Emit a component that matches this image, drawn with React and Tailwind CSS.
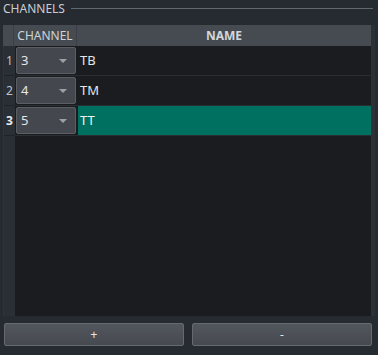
import React from 'react';

const rows = [
    { num: 1, channel: '3', name: 'TB' },
    { num: 2, channel: '4', name: 'TM' },
    { num: 3, channel: '5', name: 'TT', selected: true },
];

function Combo({ value }) {
    return (
        <div className="flex h-[27px] w-[60px] items-center justify-between rounded-[2px] border border-[#5b5f64] bg-[#44484e] pl-[4px] pr-[8px] text-[13px] text-[#e4e6e8]">
            <span>{value}</span>
            <svg width="8" height="4" viewBox="0 0 8 4">
                <path d="M0 0h8L4 4z" fill="#9da1a6" />
            </svg>
        </div>
    );
}

export default function App() {
    return (
        <div
            className="flex h-[355px] w-[378px] flex-col bg-[#262a31] text-[#dfe2e5]"
            style={{ fontFamily: '"Noto Sans", "Open Sans", sans-serif' }}
        >
            <div className="flex h-[17px] items-center gap-[6px] pl-[3px] pr-[5px]">
                <span className="text-[12px] leading-none text-[#c9ced3]">CHANNELS</span>
                <div className="h-px flex-1 bg-[#5f6871]" />
            </div>

            <div className="mx-[3px] mt-[8px] flex h-[291px] border-r-[4px] border-[#2c3037]">
                <div className="flex flex-1 flex-col bg-[#1b1c20]">
                    <div className="flex h-[21px] bg-[#464b51] text-[12px]">
                        <div className="w-[11px] border-r border-[#3b3f45]" />
                        <div className="flex w-[63px] items-center justify-center border-r border-[#3b3f45] text-[#cfd3d7]">
                            CHANNEL
                        </div>
                        <div className="flex flex-1 items-center justify-center font-bold text-[#d3d7db]">
                            NAME
                        </div>
                    </div>
                    <div className="flex flex-1">
                        <div className="flex w-[12px] flex-col border-l border-[#2f333a] bg-[#2a2e35]">
                            {rows.map((r) => (
                                <div
                                    key={r.num}
                                    className={`flex h-[30px] items-center justify-center border-b border-[#1f2226] text-[12px] ${r.selected ? 'font-bold text-[#e8eaec]' : 'text-[#bfc3c8]'}`}
                                >
                                    {r.num}
                                </div>
                            ))}
                        </div>
                        <div className="flex flex-1 flex-col">
                            {rows.map((r) => (
                                <div key={r.num} className="flex h-[30px] border-b border-[#2a2d32]">
                                    <div className="flex w-[63px] items-center pl-[1px]">
                                        <Combo value={r.channel} />
                                    </div>
                                    <div
                                        className={`flex flex-1 items-center pl-[2px] text-[13px] ${r.selected ? 'bg-[#007060] text-[#eef3f2]' : 'text-[#e4e6e8]'}`}
                                    >
                                        {r.name}
                                    </div>
                                </div>
                            ))}
                        </div>
                    </div>
                </div>
            </div>

            <div className="mt-[7px] flex gap-[8px] pl-[4px] pr-[6px]">
                <button className="flex h-[23px] flex-1 items-center justify-center rounded-[2px] border border-[#656a70] bg-gradient-to-b from-[#52575d] to-[#464a50] text-[12px] text-[#e4e6e8]">
                    +
                </button>
                <button className="flex h-[23px] flex-1 items-center justify-center rounded-[2px] border border-[#656a70] bg-gradient-to-b from-[#52575d] to-[#464a50] text-[12px] text-[#e4e6e8]">
                    -
                </button>
            </div>
        </div>
    );
}
